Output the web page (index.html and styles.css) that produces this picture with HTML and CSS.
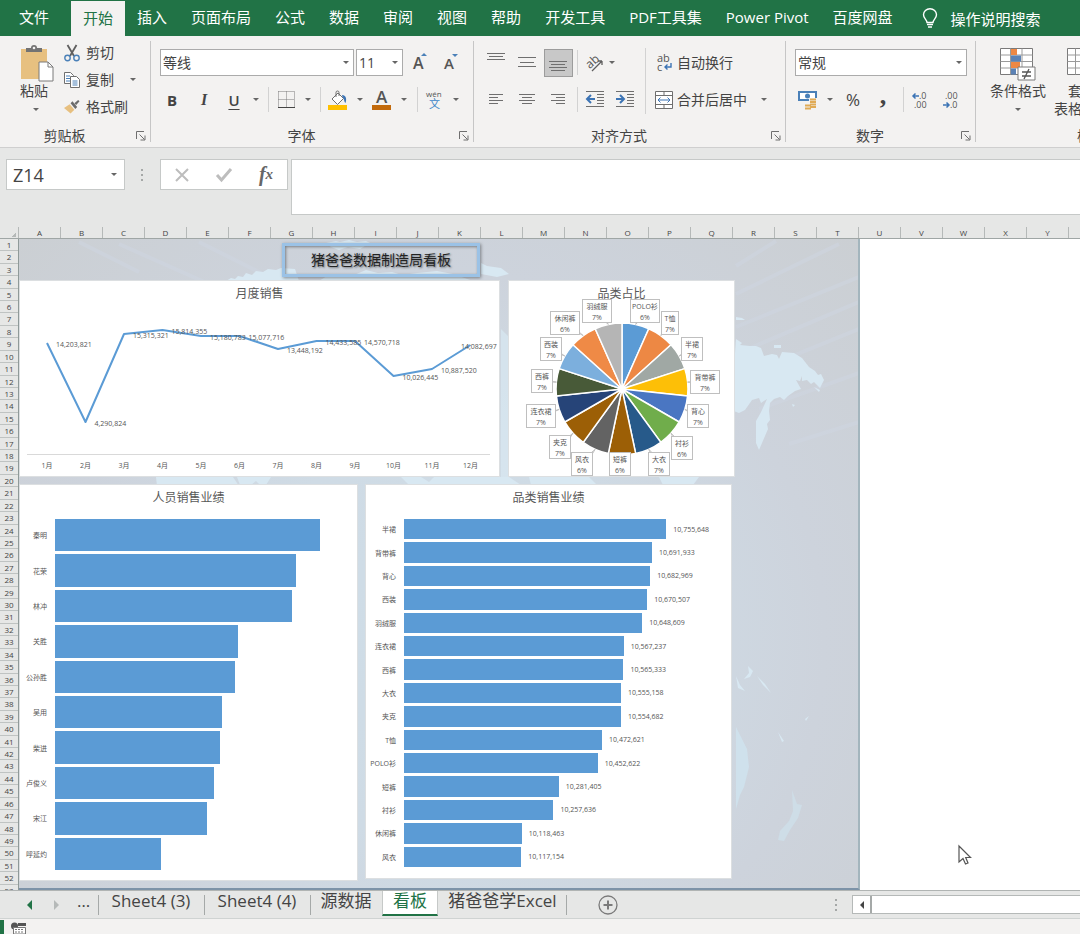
FILE: index.html
```html
<!DOCTYPE html>
<html lang="zh-CN">
<head>
    <meta charset="UTF-8">
    <meta name="viewport" content="width=device-width, initial-scale=1.0">
    <title>猪爸爸数据制造局看板</title>
    <link rel="stylesheet" href="styles.css">
</head>
<body>
    <nav class="menu">
        <a class="file" href="#">文件</a>
        <a class="active" href="#">开始</a>
        <a href="#">插入</a>
        <a href="#">页面布局</a>
        <a href="#">公式</a>
        <a href="#">数据</a>
        <a href="#">审阅</a>
        <a href="#">视图</a>
        <a href="#">帮助</a>
        <a href="#">开发工具</a>
        <a href="#">PDF工具集</a>
        <a href="#">Power Pivot</a>
        <a href="#">百度网盘</a>
        <a class="tell-me" href="#">
            <svg width="16" height="20" viewBox="0 0 16 20" fill="none" stroke="#fff" stroke-width="1.4"><path d="M5 14.5C5 11.5 1.500 10.500 1.500 6.800a6.500 6 0 0 1 13 0C14.500 10.500 11 11.500 11 14.500z"/><path d="M5 16.500h6M6 19h4"/></svg>
            操作说明搜索
        </a>
    </nav>

    <div class="ribbon">
        <!-- Clipboard -->
        <section class="group clipboard">
            <div class="group-body">
                <button class="big-btn">
                    <svg width="34" height="38" viewBox="0 0 34 38"><path d="M1 5h26v30H1z" fill="#e7c080"/><path d="M6 8V4h5a3 3 0 0 1 6 0h5v4z" fill="#737373"/><circle cx="14" cy="4" r="1.300" fill="#f3f2f1"/><path d="M19 18h9l5 5v14H19z" fill="#fff" stroke="#7a7a7a"/><path d="M28 18v5h5" fill="none" stroke="#7a7a7a"/></svg>
                    <span>粘贴</span>
                    <i class="caret"></i>
                </button>
                <div class="side">
                    <button class="text-btn">
                        <svg width="16" height="18" viewBox="0 0 16 18" fill="none"><path d="M3.500 1l6.500 11M12.500 1L6 12" stroke="#5f5f5f" stroke-width="1.800"/><circle cx="3.500" cy="14" r="2.700" stroke="#4a80b8" stroke-width="1.400"/><circle cx="12.500" cy="14" r="2.700" stroke="#4a80b8" stroke-width="1.400"/></svg>
                        剪切
                    </button>
                    <button class="text-btn">
                        <svg width="16" height="18" viewBox="0 0 16 18" fill="#fff" stroke="#6f6f6f"><path d="M.5 1.500h6l3 3v8h-9z"/><path d="M2 5h4M2 7.500h4M2 10h4" stroke="#4a80b8"/><path d="M6.500 5.500h6l3 3v8h-9z"/><path d="M8.500 10h5M8.500 12h5M8.500 14h5" stroke="#4a80b8"/></svg>
                        复制
                        <i class="caret"></i>
                    </button>
                    <button class="text-btn">
                        <svg width="16" height="16" viewBox="0 0 17 16"><path d="M0 9l6-4 5 6-4 4z" fill="#e7c080"/><path d="M7 4l2-2 5 6-2 2z" fill="#6b6b6b"/><path d="M11 4l4-3.500 1.500 1.500L13 6z" fill="#6b6b6b"/></svg>
                        格式刷
                    </button>
                </div>
            </div>
            <footer>剪贴板<svg class="launcher"><use href="#launch"/></svg></footer>
        </section>

        <!-- Font -->
        <section class="group font">
            <div class="group-body stack">
                <div class="row font-top">
                    <label class="combo"><select aria-label="字体"><option>等线</option></select></label>
                    <label class="combo"><select class="size" aria-label="字号"><option>11</option></select></label>
                    <button class="tool" aria-label="增大字号"><svg width="16" height="20" viewBox="0 0 16 20"><text class="glyph" x="1" y="16" font-size="16" font-weight="600">A</text><path d="M9 3l3-3 3 3z" fill="#4a80b8"/></svg></button>
                    <button class="tool" aria-label="减小字号"><svg width="16" height="20" viewBox="0 0 16 20"><text class="glyph" x="1" y="16" font-size="15" font-weight="600">A</text><path d="M9 1l3 3 3-3z" fill="#4a80b8"/></svg></button>
                </div>
                <div class="row font-bottom">
                    <button class="tool bold">B</button>
                    <button class="tool italic">I</button>
                    <button class="tool underline">U</button>
                    <i class="caret"></i>
                    <i class="sep"></i>
                    <button class="tool" aria-label="边框"><svg width="17" height="18" viewBox="0 0 17 18" fill="none" stroke="#7a7a7a"><path d="M.5.5h16v15M.5.5v15M8.500.5v15M.5 8.500h16" stroke-dasharray="1 1"/><path d="M0 16.500h17" stroke="#444"/></svg></button>
                    <i class="caret"></i>
                    <i class="sep"></i>
                    <button class="tool" aria-label="填充颜色"><svg width="20" height="20" viewBox="0 0 20 20"><path d="M4 9l6-6 5.500 5.500-6 6z" fill="#fff" stroke="#6f6f6f"/><path d="M8 7V2.500a1.500 1.500 0 0 1 3 0V6" fill="none" stroke="#6f6f6f"/><path d="M14 5c4 0 5 4 3.500 8-1.500-1-1-4-3-6z" fill="#3c74b5"/><path d="M0 15h19v5H0z" fill="#ffc000"/></svg></button>
                    <i class="caret"></i>
                    <button class="tool" aria-label="字体颜色"><svg width="20" height="20" viewBox="0 0 20 20"><text class="glyph" x="4" y="13" font-size="17" font-weight="600">A</text><path d="M0 15h19v5H0z" fill="#c26a0c"/></svg></button>
                    <i class="caret"></i>
                    <i class="sep"></i>
                    <button class="tool" aria-label="拼音"><svg width="18" height="20" viewBox="0 0 18 20"><text class="glyph" x="1" y="7" font-size="8">wén</text><text x="4" y="18" font-size="11" fill="#3c86c8">文</text></svg></button>
                    <i class="caret"></i>
                </div>
            </div>
            <footer>字体<svg class="launcher"><use href="#launch"/></svg></footer>
        </section>

        <!-- Alignment -->
        <section class="group align">
            <div class="group-body">
                <div class="stack align-left">
                    <div class="row align-top">
                        <button class="tool" aria-label="顶端对齐"><svg class="lines"><path d="M0 .5h18M2 3.500h14M0 6.500h18" /></svg></button>
                        <button class="tool" aria-label="垂直居中"><svg class="lines"><path d="M0 4.500h18M2 9.500h14M0 13.500h18M2 6.500" /></svg></button>
                        <button class="tool pressed" aria-label="底端对齐"><svg class="lines"><path d="M0 8.500h18M2 11.500h14M0 14.500h18M2 17.500h14"/></svg></button>
                        <i class="sep"></i>
                        <button class="tool" aria-label="方向"><svg width="20" height="18" viewBox="0 0 20 18"><text class="glyph" x="3" y="14" font-size="12" transform="rotate(-42 6 11)">ab</text><path d="M8 17L18 7M18 7v4M18 7h-4" fill="none" stroke="#5f5f5f" stroke-width="1.300"/></svg></button>
                        <i class="caret"></i>
                    </div>
                    <div class="row align-bottom">
                        <button class="tool" aria-label="左对齐"><svg class="lines"><path d="M2 4.500h14M2 7.500h9M2 10.500h14M2 13.500h9"/></svg></button>
                        <button class="tool" aria-label="居中"><svg class="lines"><path d="M1 4.500h16M4 7.500h10M1 10.500h16M4 13.500h10"/></svg></button>
                        <button class="tool" aria-label="右对齐"><svg class="lines"><path d="M2 4.500h14M7 7.500h9M2 10.500h14M7 13.500h9"/></svg></button>
                        <i class="sep"></i>
                        <button class="tool" aria-label="减少缩进"><svg class="lines"><path d="M0 1.500h18M11 4.500h7M11 7.500h7M11 10.500h7M11 13.500h7M0 16.500h18"/><path class="arrow" d="M1 9h8M5 5L1 9l4 4"/></svg></button>
                        <button class="tool" aria-label="增加缩进"><svg class="lines"><path d="M0 1.500h18M11 4.500h7M11 7.500h7M11 10.500h7M11 13.500h7M0 16.500h18"/><path class="arrow" d="M0 9h8M4 5l4 4-4 4"/></svg></button>
                    </div>
                </div>
                <i class="sep tall"></i>
                <div class="stack align-right">
                    <button class="text-btn"><svg width="18" height="18" viewBox="0 0 18 18"><text class="glyph" x="2" y="8" font-size="11">ab</text><text class="glyph" x="2" y="17" font-size="11">c</text><path d="M16 9v4h-6M12.500 10.500L10 13l2.500 2.500" fill="none" stroke="#3c74b5" stroke-width="1.400"/></svg>自动换行</button>
                    <button class="text-btn"><svg width="18" height="18" viewBox="0 0 18 18" fill="#fff" stroke="#6f6f6f"><path d="M.5.5h17v17H.5zM.5 4.500h17M.5 13.500h17M9 .5v4M9 13.500v4"/><path d="M3 9h12M5.500 6.500L3 9l2.500 2.500M12.500 6.500L15 9l-2.500 2.500" fill="none" stroke="#3c74b5"/></svg>合并后居中<i class="caret"></i></button>
                </div>
            </div>
            <footer>对齐方式<svg class="launcher"><use href="#launch"/></svg></footer>
        </section>

        <!-- Number -->
        <section class="group number">
            <div class="group-body stack">
                <div class="row number-top">
                    <label class="combo"><select aria-label="数字格式"><option>常规</option></select></label>
                </div>
                <div class="row number-bottom">
                    <button class="tool" aria-label="会计数字格式"><svg width="20" height="20" viewBox="0 0 20 20"><path d="M1 2h17v8H1z" fill="#fff" stroke="#4a80b8" stroke-width="2"/><circle cx="9.500" cy="6" r="2.500" fill="#4a80b8"/><path d="M11 8h8v12H6v-6h5z" fill="#f3f2f1"/><path d="M12 9.500h6M12 12h6M12 14.500h6M7 15.500h6M7 18.500h6M12 17h6" stroke="#e0aa55" stroke-width="1.800"/></svg></button>
                    <i class="caret"></i>
                    <button class="tool percent">%</button>
                    <button class="tool comma">,</button>
                    <i class="sep"></i>
                    <button class="tool" aria-label="增加小数位数"><svg width="18" height="18" viewBox="0 0 18 18"><text class="glyph" x="7" y="8" font-size="9">.0</text><text class="glyph" x="2" y="17" font-size="9">.00</text><path d="M1 5h6M3.500 2.500L1 5l2.500 2.500" fill="none" stroke="#3c74b5" stroke-width="1.500"/></svg></button>
                    <button class="tool" aria-label="减少小数位数"><svg width="18" height="18" viewBox="0 0 18 18"><text class="glyph" x="3" y="8" font-size="9">.00</text><text class="glyph" x="8" y="17" font-size="9">.0</text><path d="M1 14h6M4.500 11.500L7 14l-2.500 2.500" fill="none" stroke="#3c74b5" stroke-width="1.500"/></svg></button>
                </div>
            </div>
            <footer>数字<svg class="launcher"><use href="#launch"/></svg></footer>
        </section>

        <!-- Styles -->
        <section class="group styles">
            <div class="group-body">
                <button class="big-btn">
                    <svg width="36" height="34" viewBox="0 0 36 34"><path d="M.5.5h32v26H.5z" fill="#fff" stroke="#7a7a7a"/><path d="M.5 7h32M.5 13.500h32M.5 20h32M10.500.5v26M22 .5v26" stroke="#9a9a9a"/><path d="M11 1h6v6h-6zM11 14h9v6h-9z" fill="#ed8844"/><path d="M11 7.500h10v6H11zM11 20.500h5v6h-5z" fill="#5b82b5"/><path d="M18 19h17v13H18z" fill="#fff" stroke="#7a7a7a"/><path d="M22 24h9M22 28h9M29 21l-5 10" stroke="#555" stroke-width="1.300"/></svg>
                    <span>条件格式</span>
                    <i class="caret"></i>
                </button>
                <button class="big-btn">
                    <svg width="30" height="34" viewBox="0 0 30 34"><path d="M.5.5h29v26H.5z" fill="#fff" stroke="#7a7a7a"/><path d="M.5 7h29M.5 13.500h29M.5 20h29M8.500.5v26M18 .5v26" stroke="#9a9a9a"/></svg>
                    <span>套用<br>表格格式</span>
                </button>
            </div>
            <footer>样式</footer>
        </section>
    </div>

    <div class="formula-bar">
        <label class="combo name-box"><input type="text" value="Z14" aria-label="名称框"></label>
        <i class="dots"></i>
        <div class="fx-buttons">
            <button aria-label="取消"><svg width="14" height="14" viewBox="0 0 14 14"><path d="M1 1l12 12M13 1L1 13" stroke="#bdbdbd" stroke-width="2"/></svg></button>
            <button aria-label="输入"><svg width="16" height="14" viewBox="0 0 16 14"><path d="M1 7l4.500 5L15 1" fill="none" stroke="#bdbdbd" stroke-width="3"/></svg></button>
            <button class="fx">f<sub>x</sub></button>
        </div>
        <textarea class="formula" aria-label="编辑栏"></textarea>
    </div>

    <div class="col-heads" id="col-heads"><span class="corner"></span></div>

    <main class="sheet">
        <div class="row-heads" id="row-heads"></div>
        <div class="dashboard">
            <svg class="map" width="840" height="650" viewBox="0 0 840 650">
                <g stroke="#cfd6e2" stroke-width="4" opacity="0.5">
                    <path d="M717 27l40-25M717 55L820 5M717 88l123-50M717 115l123-52M717 140l123-50M740 170l100-36M770 205l70-22M100 5l90 40M180 3l80 40M60 3l60 30"/>
                </g>
                <g fill="#d8e8f2">
                    <path d="M207 42l5-3 4 1 3-3 5 1 3-4 6 2 4-4 7 1 5-3 8 1 5-2 14 1 4 12zM307 4l10-2 4 1 9-2 8 2 9-1 8 4-9 1-5 3-12-2-9 3-8-3zM300 42l8-5 9-1 6 2 12-2 12-5 12 3 14-1 10 3 15-2 20-2 16 3 20 7zM462 24l6 3 14 2 8 6-12 3-16-3z"/>
                    <path d="M482 90l8 8v130l-8 10zM482 200l8 20v20h-8z" opacity="0.7"/>
                    <path d="M137 238h77l6 9h-82zM218 238h34l-5 8h-6l-4-4-5 4h-11zM382 238h20l8 5 5-5h75l12 8H390zM510 238h60l8 8h-66zM640 238h40l-6 8h-30z"/>
                    <path d="M717 100l6 4-2 2 10 1h6l5 2 3 8 8-2 5 1 2 4 3-7 12 1 8 5 7 9 6 4 3 4 3-1 3 6-4 8-6-6-3 2-4-4-5 1v-5l-2 5-4-1 5 9-6 2-7 5-4 4-4-3-6 2-4 4-1 8 1 9-3 4 1 5-6 14-3 7-3-7v-22l4-7 2-4 5-11-6 4-2-5-7 2-7 10-6 3-8-3zM755 106h7v3h-7zM717 78l6 1 3 2h-9zM795 148l6 3-1 2zM773 165l3 1-2 2z"/>
                    <path d="M717 488l5 10 6 12 2 18-5 20-4 8-4 14z" fill="#cfe1ec"/>
                    <path d="M773 551l5 14 5 1-4 13-8 12-6 11-6-1 2-9 9-10 4-10z" fill="#cedde7"/>
                    <path d="M717 437l4 9 5 6-7-3zM729 427l5 5-3 6-6 2 5-6zM738 437l8 8 6 9-8-8zM759 493l6 9-2 1zM786 480l4-3-3 5z"/>
                </g>
            </svg>
            <h1 class="board-title">猪爸爸数据制造局看板</h1>
            <div class="charts top">
                <section class="card monthly">
                    <h2>月度销售</h2>
                    <svg class="chart" id="line-chart" width="482" height="197" viewBox="0 0 482 197"></svg>
                </section>
                <section class="card share">
                    <h2>品类占比</h2>
                    <svg class="chart" id="pie-chart" width="227" height="197" viewBox="0 0 227 197"></svg>
                </section>
            </div>
            <div class="charts bottom">
                <section class="card people">
                    <h2>人员销售业绩</h2>
                    <div class="bars" id="people-bars"></div>
                </section>
                <section class="card category">
                    <h2>品类销售业绩</h2>
                    <div class="bars" id="category-bars"></div>
                </section>
            </div>
        </div>
        <svg class="pointer" width="14" height="21" viewBox="0 0 14 21"><path d="M1 1v16l4-3.500 2.500 5.500 2.500-1-2.300-5.500H12.500z" fill="#fff" stroke="#555" stroke-width="1.200"/></svg>
    </main>

    <div class="sheet-bar">
        <div class="sheet-nav">
            <button aria-label="上一个"><i class="tri"></i></button>
            <button aria-label="下一个"><i class="tri next"></i></button>
            <button class="more">…</button>
        </div>
        <a href="#">Sheet4 (3)</a>
        <a href="#">Sheet4 (4)</a>
        <a class="source" href="#">源数据</a>
        <a class="active" href="#">看板</a>
        <a class="last" href="#">猪爸爸学Excel</a>
        <button class="add" aria-label="新工作表"><svg width="20" height="20" viewBox="0 0 20 20" fill="none" stroke="#7a7a7a" stroke-width="1.300"><circle cx="10" cy="10" r="9"/><path d="M10 5.500v9M5.500 10h9" stroke-width="2"/></svg></button>
        <i class="dots"></i>
        <div class="scroll"><button aria-label="向左滚动"><i class="tri dark"></i></button></div>
    </div>

    <div class="status-bar">
        <i class="ready"></i>
        <svg width="16" height="12" viewBox="0 0 16 12"><circle cx="3.500" cy="4" r="3.500" fill="#555"/><path d="M7 1h8v3H7z" fill="#555"/><path d="M2.500 5.500h12V12h-12z" fill="#fff" stroke="#777"/><path d="M4 7.500h9M4 10h9" stroke="#777" stroke-dasharray="2 1"/></svg>
    </div>

    <svg class="defs" width="0" height="0">
        <symbol id="launch" viewBox="0 0 10 10"><path d="M.5 8V.5H8M3.500 3.500l5 5M9 4.500V9H4.500" fill="none" stroke="#6f6f6f"/></symbol>
    </svg>

    <script>
        // Column letters A - Z and row numbers
        const colHeads = document.getElementById('col-heads');
        for (let i = 0; i < 26; i++) {
            colHeads.insertAdjacentHTML('beforeend', `<span>${String.fromCharCode(65 + i)}</span>`);
        }
        const rowHeads = document.getElementById('row-heads');
        for (let i = 1; i <= 53; i++) {
            rowHeads.insertAdjacentHTML('beforeend', `<span>${i}</span>`);
        }

        // Monthly sales: [label, y]
        const months = [
            ['14,203,821', 63], ['4,290,824', 142], ['15,315,321', 54], ['15,814,355', 50],
            ['15,180,783', 56], ['15,077,716', 56], ['13,448,192', 69], ['14,433,585', 61],
            ['14,570,718', 61], ['10,026,445', 96], ['10,887,520', 89], ['14,082,697', 65]
        ];
        const monthX = i => 29 + i * 38.5;
        let line = '<path class="axis" d="M9 174.5h463"/>';
        line += `<polyline points="${months.map((m, i) => monthX(i) + ',' + m[1]).join(' ')}"/>`;
        months.forEach((m, i) => {
            const x = i === 11 ? 443 : monthX(i) + 9;
            line += `<text x="${x}" y="${m[1] + 4}">${m[0]}</text>`;
            line += `<text class="mid" x="${monthX(i)}" y="188">${i + 1}月</text>`;
        });
        document.getElementById('line-chart').innerHTML = line;

        // Category share: [name, percent, colour, label x, label y, label width]
        const shares = [
            ['POLO衫', 6, '#5b9bd5', 137, 31, 30],
            ['T恤', 7, '#ed8844', 162, 43, 18],
            ['半裙', 7, '#a0a8a4', 184, 69, 22],
            ['背带裤', 7, '#fdbf07', 197, 102, 30],
            ['背心', 7, '#4a76c2', 190, 136, 22],
            ['衬衫', 6, '#70ad4b', 174, 168, 22],
            ['大衣', 7, '#275a8a', 151, 184, 22],
            ['短裤', 6, '#9c5f06', 112, 184, 22],
            ['风衣', 6, '#636363', 74, 184, 22],
            ['夹克', 7, '#9c5f06', 52, 167, 22],
            ['连衣裙', 7, '#264478', 33, 136, 30],
            ['西裤', 7, '#485a38', 34, 101, 22],
            ['西装', 7, '#7cafdd', 43, 69, 22],
            ['休闲裤', 6, '#ef8a46', 57, 43, 30],
            ['羽绒服', 7, '#b5b5b5', 89, 31, 30]
        ];
        const cx = 114, cy = 109, r = 66;
        const edge = deg => {
            const a = (deg - 90) * Math.PI / 180;
            return (cx + r * Math.cos(a)).toFixed(1) + ' ' + (cy + r * Math.sin(a)).toFixed(1);
        };
        let slices = '', labels = '';
        shares.forEach(([name, pct, color, x, y, w], i) => {
            slices += `<path class="slice" fill="${color}" d="M${cx} ${cy}L${edge(i * 24)}A${r} ${r} 0 0 1 ${edge(i * 24 + 24)}z"/>`;
            labels += `<path class="callout" d="M${x - 4} ${y}L${edge(i * 24 + 12)}L${x + 4} ${y}z"/>`;
            labels += `<rect class="callout" x="${x - w / 2 + 0.5}" y="${y - 11.5}" width="${w - 1}" height="23"/>`;
            labels += `<text class="mid" x="${x}" y="${y - 2}">${name}</text><text class="mid" x="${x}" y="${y + 9}">${pct}%</text>`;
        });
        document.getElementById('pie-chart').innerHTML = slices + labels;

        // Horizontal bars, width in percent of the axis
        function drawBars(id, data, min, max, showValue) {
            document.getElementById(id).innerHTML = data.map(([name, value]) => `
                <span class="name">${name}</span>
                <div class="track"><div class="bar" style="width: ${((value - min) / (max - min) * 100).toFixed(1)}%"></div>${showValue ? `<span class="value">${value.toLocaleString('en-US')}</span>` : ''}</div>`).join('');
        }
        drawBars('people-bars', [
            ['秦明', 265], ['花荣', 241], ['林冲', 237], ['关胜', 183], ['公孙胜', 180],
            ['吴用', 167], ['柴进', 165], ['卢俊义', 159], ['宋江', 152], ['呼延灼', 106]
        ], 0, 300, false);
        drawBars('category-bars', [
            ['半裙', 10755648], ['背带裤', 10691933], ['背心', 10682969], ['西装', 10670507],
            ['羽绒服', 10648609], ['连衣裙', 10567237], ['西裤', 10565333], ['大衣', 10555158],
            ['夹克', 10554682], ['T恤', 10472621], ['POLO衫', 10452622], ['短裤', 10281405],
            ['衬衫', 10257636], ['休闲裤', 10118463], ['风衣', 10117154]
        ], 9600000, 11000000, true);
    </script>
</body>
</html>
```
FILE: styles.css
```css
* {
    box-sizing: border-box;
}

body {
    margin: 0;
    height: 100vh;
    display: flex;
    flex-direction: column;
    overflow: hidden;
    background: #e6e7e6;
    color: #444;
    font-family: "Open Sans", "Noto Sans CJK SC", sans-serif;
    font-size: 14px;
}

button {
    display: flex;
    align-items: center;
    justify-content: center;
    padding: 0;
    border: 0;
    background: none;
    color: inherit;
    font: inherit;
}

a {
    color: inherit;
    text-decoration: none;
}

svg {
    flex: none;
    overflow: visible;
}

.defs {
    position: absolute;
}

.glyph {
    fill: #555;
}

/* Menu */
.menu {
    flex: none;
    display: flex;
    height: 36px;
    background: #217346;
    color: #fff;
    font-size: 15px;
    white-space: nowrap;
    overflow: hidden;
}

.menu a {
    display: flex;
    align-items: center;
    padding: 0 12px 3px;
}

.menu .file {
    width: 71px;
    padding-left: 19px;
}

.menu .active {
    margin-top: 1px;
    background: #f3f2f1;
    color: #217346;
}

.menu .tell-me {
    gap: 13px;
    margin-left: 5px;
    padding-bottom: 0;
}

/* Ribbon */
.ribbon {
    flex: none;
    display: flex;
    height: 112px;
    background: #f3f2f1;
    border-bottom: 1px solid #cfcfcf;
    white-space: nowrap;
    overflow: hidden;
}

.group {
    position: relative;
    flex: none;
    display: flex;
    flex-direction: column;
    justify-content: space-between;
}

.group::after {
    content: "";
    position: absolute;
    top: 5px;
    right: 0;
    bottom: 5px;
    width: 1px;
    background: #c6c6c6;
}

.group footer {
    display: flex;
    align-items: center;
    justify-content: center;
    height: 24px;
    padding-right: 22px;
}

.launcher {
    position: absolute;
    right: 5px;
    bottom: 6px;
    width: 10px;
    height: 10px;
}

.group-body {
    display: flex;
}

.stack {
    display: flex;
    flex-direction: column;
    padding-top: 8px;
}

.row {
    display: grid;
    align-items: center;
    justify-items: center;
    height: 37px;
}

.clipboard { width: 151px; }
.font { width: 323px; }
.align { width: 312px; }
.number { width: 190px; }
.styles { width: 230px; }
.styles footer { padding: 0; }

.caret {
    border: 3px solid transparent;
    border-top-color: #666;
    border-bottom: 0;
}

.sep {
    width: 1px;
    height: 25px;
    background: #d2d2d2;
}

.sep.tall {
    height: 66px;
    margin-top: 12px;
}

.big-btn {
    flex-direction: column;
    align-items: flex-start;
    justify-content: flex-start;
    line-height: 18px;
}

.big-btn .caret {
    margin: 8px 0 0 13px;
}

.clipboard .big-btn {
    width: 34px;
    margin: 8px 10px 0 20px;
}

.styles .big-btn {
    align-items: center;
    width: 62px;
    margin: 12px 0 0 11px;
}

.styles .big-btn .caret {
    margin-left: 0;
}

.styles .big-btn + .big-btn {
    margin-left: 2px;
}

.side {
    padding-top: 3px;
}

.text-btn {
    height: 27px;
    gap: 6px;
    line-height: 20px;
}

.text-btn .caret {
    margin-left: 10px;
}

.font-top {
    grid-template-columns: 194px 47px 30px 28px;
    column-gap: 2px;
    padding-left: 9px;
    justify-content: start;
}

.font-bottom {
    grid-template-columns: 28px 36px 24px 20px 4px 32px 12px 12px 24px 20px 24px 20px 6px 28px 16px;
    padding-left: 7px;
    justify-content: start;
}

.combo {
    position: relative;
    display: block;
    width: 100%;
}

.combo::after {
    content: "";
    position: absolute;
    top: 12px;
    right: 5px;
    border: 3px solid transparent;
    border-top-color: #666;
    border-bottom: 0;
    pointer-events: none;
}

.combo select {
    appearance: none;
    display: block;
    width: 100%;
    height: 27px;
    padding: 0 2px;
    border: 1px solid #ababab;
    border-radius: 0;
    background: #fff;
    color: #444;
    font: inherit;
}

.bold {
    font-size: 15px;
    font-weight: 700;
}

.italic {
    font: italic bold 16px "Liberation Serif", serif;
}

.underline {
    font-size: 15px;
    font-weight: 600;
    text-decoration: underline;
    text-underline-offset: 3px;
}

.percent {
    font-size: 17px;
}

.comma {
    height: 24px;
    align-items: flex-start;
    font: bold 26px/16px "Liberation Serif", serif;
}

.align-left {
    width: 171px;
    padding-left: 6px;
}

.align-top {
    grid-template-columns: 32px 30px 32px 6px 28px 8px;
    justify-content: start;
}

.align-bottom {
    grid-template-columns: 32px 30px 32px 6px 30px 30px;
    justify-content: start;
}

.lines {
    width: 18px;
    height: 19px;
    fill: none;
    stroke: #6f6f6f;
}

.lines .arrow {
    stroke: #3c74b5;
    stroke-width: 2;
}

.pressed {
    width: 29px;
    height: 28px;
    background: #c8c8c8;
    border: 1px solid #9c9c9c;
}

.align-right {
    padding-left: 9px;
}

.align-right .text-btn {
    height: 37px;
    justify-content: flex-start;
    gap: 4px;
}

.number-top {
    padding: 0 9px;
}

.number-bottom {
    grid-template-columns: 26px 18px 28px 32px 8px 28px 32px;
    padding-left: 9px;
    justify-content: start;
}

/* Formula bar */
.formula-bar {
    flex: none;
    display: flex;
    align-items: flex-start;
    height: 79px;
    padding: 11px 0 0 6px;
}

.name-box {
    width: 119px;
}

.name-box input {
    display: block;
    width: 100%;
    height: 31px;
    padding: 0 6px;
    border: 1px solid #c6c9c8;
    background: #fff;
    color: #444;
    font: inherit;
    font-size: 18px;
}

.name-box::after {
    top: 14px;
    right: 8px;
}

.dots {
    width: 2px;
    height: 12px;
    margin: 10px 17px 0 16px;
    background: repeating-linear-gradient(#a5a8a7 0 2px, transparent 2px 5px);
}

.fx-buttons {
    display: flex;
    width: 128px;
    height: 31px;
    margin-right: 3px;
    background: #fff;
    border: 1px solid #c6c9c8;
}

.fx-buttons button {
    flex: 1;
}

.fx-buttons .fx {
    color: #666;
    font: italic bold 20px "Liberation Serif", serif;
}

.fx sub {
    font-size: 15px;
    vertical-align: baseline;
}

.formula {
    flex: 1;
    height: 56px;
    border: 1px solid #c6c9c8;
    border-right: 0;
    background: #fff;
    resize: none;
}

/* Sheet */
.col-heads {
    flex: none;
    display: flex;
    height: 12px;
    border-bottom: 1px solid #9fa6a5;
    overflow: hidden;
    font-size: 8px;
    line-height: 11px;
    text-align: center;
}

.col-heads span {
    flex: none;
    width: 42px;
    border-right: 1px solid #b5b9b8;
}

.col-heads .corner {
    width: 19px;
    background: linear-gradient(135deg, transparent 50%, #b5b9b8 50%) 11px 5px / 5px 5px no-repeat;
}

.sheet {
    position: relative;
    flex: 1;
    display: flex;
    min-height: 0;
    overflow: hidden;
    background: #fff;
    border-bottom: 1px solid #b0b4b3;
}

.row-heads {
    flex: none;
    display: grid;
    grid-auto-rows: 1fr;
    width: 19px;
    height: 658px;
    background: #e6e7e6;
    border-right: 1px solid #8f9a99;
    font-size: 8px;
    line-height: 12px;
    text-align: center;
}

.row-heads span {
    overflow: hidden;
    border-bottom: 1px solid #bfc3c2;
}

.dashboard {
    position: relative;
    flex: none;
    width: 841px;
    padding-top: 4px;
    background: radial-gradient(ellipse at 50% 62%, #cfdde7 0%, #cfdbe5 35%, #cdd3dc 65%, #cbcfd3 100%);
    border-right: 2px solid #a3b5bd;
    border-bottom: 2px solid #7d93a8;
    overflow: hidden;
}

.map {
    position: absolute;
    top: 0;
    left: 0;
}

.board-title {
    position: relative;
    width: 198px;
    height: 34px;
    margin: 0 0 3px 263px;
    border: 3px solid #9bc2e6;
    box-shadow: 1px 1px 3px rgba(0, 0, 0, 0.4), inset 1px 1px 3px rgba(0, 0, 0, 0.4);
    color: #222;
    font-size: 14px;
    font-weight: 400;
    line-height: 28px;
    text-align: center;
    text-shadow: 1px 1px 2px rgba(0, 0, 0, 0.5);
}

.charts {
    position: relative;
    display: flex;
    align-items: flex-start;
}

.top {
    gap: 8px;
    margin-bottom: 7px;
}

.bottom {
    gap: 7px;
}

.card {
    display: grid;
    background: #fff;
    outline: 1px solid #dcdfe1;
    outline-offset: -1px;
}

.monthly { width: 481px; }
.share { width: 227px; }
.people { width: 339px; height: 397px; }
.category { width: 367px; height: 395px; }

.card h2 {
    margin: 0;
    padding-top: 5px;
    color: #595959;
    font-size: 12px;
    font-weight: 400;
    line-height: 18px;
    text-align: center;
}

.monthly h2,
.share h2,
.chart {
    grid-area: 1 / 1;
}

.chart {
    position: relative;
}

.monthly .chart {
    margin-left: -1px;
}

.chart text {
    fill: #555;
    font-size: 7px;
}

.chart .mid {
    text-anchor: middle;
}

.chart .axis {
    stroke: #d9d9d9;
}

.chart polyline {
    fill: none;
    stroke: #5b9bd5;
    stroke-width: 2;
    stroke-linejoin: round;
}

.slice {
    stroke: #fff;
    stroke-width: 1.5;
}

.callout {
    fill: #fff;
    stroke: #bfbfbf;
}

.bars {
    display: grid;
    grid-template-columns: 28px 1fr;
    grid-auto-rows: 1fr;
    gap: 3px 8px;
    color: #555;
    font-size: 7px;
}

.people .bars {
    height: 351px;
    padding-right: 3px;
}

.category .bars {
    grid-template-columns: 31px 1fr;
    height: 348px;
    padding-right: 10px;
}

.people,
.category {
    grid-template-rows: 35px auto;
    align-content: start;
}

.name {
    align-self: center;
    text-align: right;
    white-space: nowrap;
}

.track {
    display: flex;
    align-items: center;
}

.bar {
    flex: none;
    height: 100%;
    background: #5b9bd5;
}

.value {
    margin-left: 7px;
}

.pointer {
    position: absolute;
    left: 958px;
    bottom: 24px;
}

/* Sheet tabs */
.sheet-bar {
    flex: none;
    display: flex;
    height: 28px;
    border-bottom: 1px solid #cfd3d2;
    font-size: 17px;
    line-height: 20px;
    white-space: nowrap;
}

.sheet-nav {
    display: flex;
    align-items: center;
    width: 98px;
    padding-left: 16px;
}

.sheet-nav button {
    width: 27px;
    height: 24px;
}

.sheet-nav .more {
    line-height: 16px;
    align-items: flex-start;
}

.tri {
    border: 5px solid transparent;
    border-right-color: #217346;
    border-left: 0;
}

.tri.next {
    transform: rotate(180deg);
    border-right-color: #b5b9b8;
}

.tri.dark {
    border-width: 4px;
    border-left: 0;
    border-right-color: #444;
}

.sheet-bar a {
    position: relative;
    width: 106px;
    height: 25px;
    text-align: center;
}

.sheet-bar a::before {
    content: "";
    position: absolute;
    left: 0;
    top: 4px;
    width: 1px;
    height: 20px;
    background: #a5a9a8;
}

.sheet-bar .source {
    width: 72px;
}

.sheet-bar .active {
    width: 56px;
    background: #fff;
    border: 1px solid #c6c9c8;
    border-width: 0 1px;
    border-bottom: 2px solid #217346;
    color: #217346;
}

.sheet-bar .active::before {
    display: none;
}

.sheet-bar .last {
    width: 129px;
}

.sheet-bar .last::before {
    right: 0;
    left: auto;
}

.add {
    width: 82px;
}

.sheet-bar .dots {
    margin: 8px 15px 0 auto;
}

.scroll {
    width: 228px;
    height: 19px;
    margin-top: 4px;
    background: #fff;
    border: 1px solid #b5b9b8;
    border-right: 0;
}

.scroll button {
    width: 19px;
    height: 17px;
    border-right: 2px solid #a5a9a8;
}

/* Status bar */
.status-bar {
    flex: none;
    display: flex;
    align-items: flex-end;
    gap: 7px;
    height: 15px;
    background: #f3f2f1;
}

.ready {
    width: 4px;
    height: 14px;
    background: #217346;
}
```
